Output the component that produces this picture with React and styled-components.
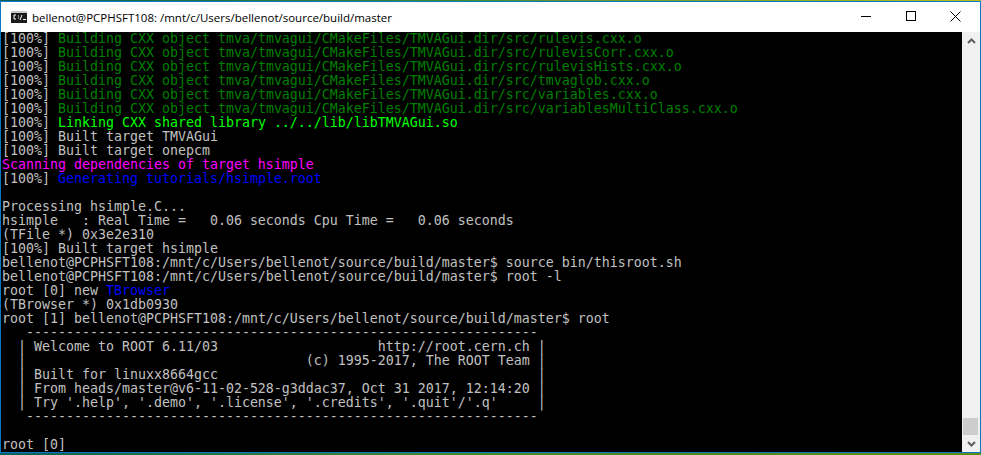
import React from "react";
import styled, { createGlobalStyle } from "styled-components";

const GlobalStyle = createGlobalStyle`
  html, body {
    margin: 0;
    padding: 0;
    background: #000;
  }
`;

const Win = styled.div`
  width: 981px;
  height: 455px;
  display: flex;
  flex-direction: column;
  overflow: hidden;
  background: #000;
`;

const DesktopEdge = styled.div`
  height: ${(p) => p.$h}px;
  flex: none;
  background: linear-gradient(90deg, #0e5f5a 0%, #3f8a2a 45%, ${(p) => p.$end} 100%);
`;

const Frame = styled.div`
  flex: 1;
  min-height: 0;
  display: flex;
  flex-direction: column;
  border: 1px solid #0b78c4;
`;

const TitleBar = styled.div`
  height: 30px;
  flex: none;
  display: flex;
  align-items: center;
  background: #fff;
  padding: 0 2px 0 10px;
`;

const Title = styled.div`
  margin-left: 5px;
  font: 11.5px "Open Sans", "Liberation Sans", sans-serif;
  color: #000;
  white-space: nowrap;
  flex: 1;
`;

const WinButton = styled.div`
  width: 45px;
  height: 30px;
  padding-bottom: 2px;
  box-sizing: border-box;
  display: flex;
  align-items: center;
  justify-content: center;
`;

const Main = styled.div`
  flex: 1;
  display: flex;
  min-height: 0;
`;

const Term = styled.div`
  flex: 1;
  padding-left: 1px;
  font: 13.29px/14px "DejaVu Sans Mono", "Liberation Mono", monospace;
  color: #c0c0c0;
  white-space: pre;
  overflow: hidden;
`;

const Line = styled.div`
  height: 14px;
`;

const Tint = styled.span`
  color: ${(p) => p.$c};
`;

const ScrollBar = styled.div`
  width: 18px;
  flex: none;
  display: flex;
  flex-direction: column;
  background: #f0f0f0;
`;

const Arrow = styled.div`
  height: 17px;
  flex: none;
  display: flex;
  align-items: center;
  justify-content: center;
`;

const Track = styled.div`
  flex: 1;
  display: flex;
  flex-direction: column;
  justify-content: flex-end;
`;

const Thumb = styled.div`
  height: 17px;
  background: #cdcdcd;
  margin: 0 2px 0 1px;
`;

const GREEN = "#008000";
const BRIGHT = "#00ff00";
const MAGENTA = "#ff00ff";
const BLUE = "#0000ff";
const P = "bellenot@PCPHSFT108:/mnt/c/Users/bellenot/source/build/master$";
const OBJ = "Building CXX object tmva/tmvagui/CMakeFiles/TMVAGui.dir/src/";

const RULE = "   " + "-".repeat(64);
// banner rows: 62 columns between the pipes
const bannerRow = (left, right = "") => "  | " + left + " ".repeat(62 - left.length - right.length) + right + " |";

function ConsoleIcon() {
  return (
    <svg width="16" height="12" viewBox="0 0 16 12">
      <rect width="16" height="12" fill="#1a1a1a" />
      <rect width="16" height="2" fill="#c8c8c8" />
      <path d="M5 4H3v4h2M7 5h1M7 7h1M9 9l2-5M12 8.5h3" stroke="#fff" fill="none" />
    </svg>
  );
}

function App() {
  return (
    <>
      <GlobalStyle />
      <Win>
        <DesktopEdge $h={1} $end="#b8c020" />
        <Frame>
          <TitleBar>
            <ConsoleIcon />
            <Title>bellenot@PCPHSFT108: /mnt/c/Users/bellenot/source/build/master</Title>
            <WinButton>
              <svg width="10" height="10" viewBox="0 0 10 10">
                <path d="M0 5.5h10" stroke="#000" />
              </svg>
            </WinButton>
            <WinButton>
              <svg width="10" height="10" viewBox="0 0 10 10">
                <rect x=".5" y=".5" width="9" height="9" fill="none" stroke="#000" />
              </svg>
            </WinButton>
            <WinButton>
              <svg width="11" height="11" viewBox="0 0 11 11">
                <path d="M.5.5l10 10M10.5.5l-10 10" stroke="#000" />
              </svg>
            </WinButton>
          </TitleBar>
          <Main>
            <Term>
              {["rulevis", "rulevisCorr", "rulevisHists", "tmvaglob", "variables", "variablesMultiClass"].map((n) => (
                <Line key={n}>
                  [100%] <Tint $c={GREEN}>{OBJ + n}.cxx.o</Tint>
                </Line>
              ))}
              <Line>
                [100%] <Tint $c={BRIGHT}>Linking CXX shared library ../../lib/libTMVAGui.so</Tint>
              </Line>
              <Line>[100%] Built target TMVAGui</Line>
              <Line>[100%] Built target onepcm</Line>
              <Line>
                <Tint $c={MAGENTA}>Scanning dependencies of target hsimple</Tint>
              </Line>
              <Line>
                [100%] <Tint $c={BLUE}>Generating tutorials/hsimple.root</Tint>
              </Line>
              <Line />
              <Line>Processing hsimple.C...</Line>
              <Line>hsimple   : Real Time =   0.06 seconds Cpu Time =   0.06 seconds</Line>
              <Line>(TFile *) 0x3e2e310</Line>
              <Line>[100%] Built target hsimple</Line>
              <Line>{P} source bin/thisroot.sh</Line>
              <Line>{P} root -l</Line>
              <Line>
                root [0] new <Tint $c={BLUE}>TBrowser</Tint>
              </Line>
              <Line>(TBrowser *) 0x1db0930</Line>
              <Line>root [1] {P} root</Line>
              <Line>{RULE}</Line>
              <Line>{bannerRow("Welcome to ROOT 6.11/03", "http://root.cern.ch")}</Line>
              <Line>{bannerRow("", "(c) 1995-2017, The ROOT Team")}</Line>
              <Line>{bannerRow("Built for linuxx8664gcc")}</Line>
              <Line>{bannerRow("From heads/master@v6-11-02-528-g3ddac37, Oct 31 2017, 12:14:20")}</Line>
              <Line>{bannerRow("Try '.help', '.demo', '.license', '.credits', '.quit'/'.q'")}</Line>
              <Line>{RULE}</Line>
              <Line />
              <Line>root [0]</Line>
            </Term>
            <ScrollBar>
              <Arrow>
                <svg width="9" height="6" viewBox="0 0 9 6">
                  <path d="M1 5l3.5-3.5L8 5" fill="none" stroke="#606060" strokeWidth="2" />
                </svg>
              </Arrow>
              <Track>
                <Thumb />
              </Track>
              <Arrow>
                <svg width="9" height="6" viewBox="0 0 9 6">
                  <path d="M1 1l3.5 3.5L8 1" fill="none" stroke="#606060" strokeWidth="2" />
                </svg>
              </Arrow>
            </ScrollBar>
          </Main>
        </Frame>
        <DesktopEdge $h={2} $end="#5f8a10" />
      </Win>
    </>
  );
}

export default App;
